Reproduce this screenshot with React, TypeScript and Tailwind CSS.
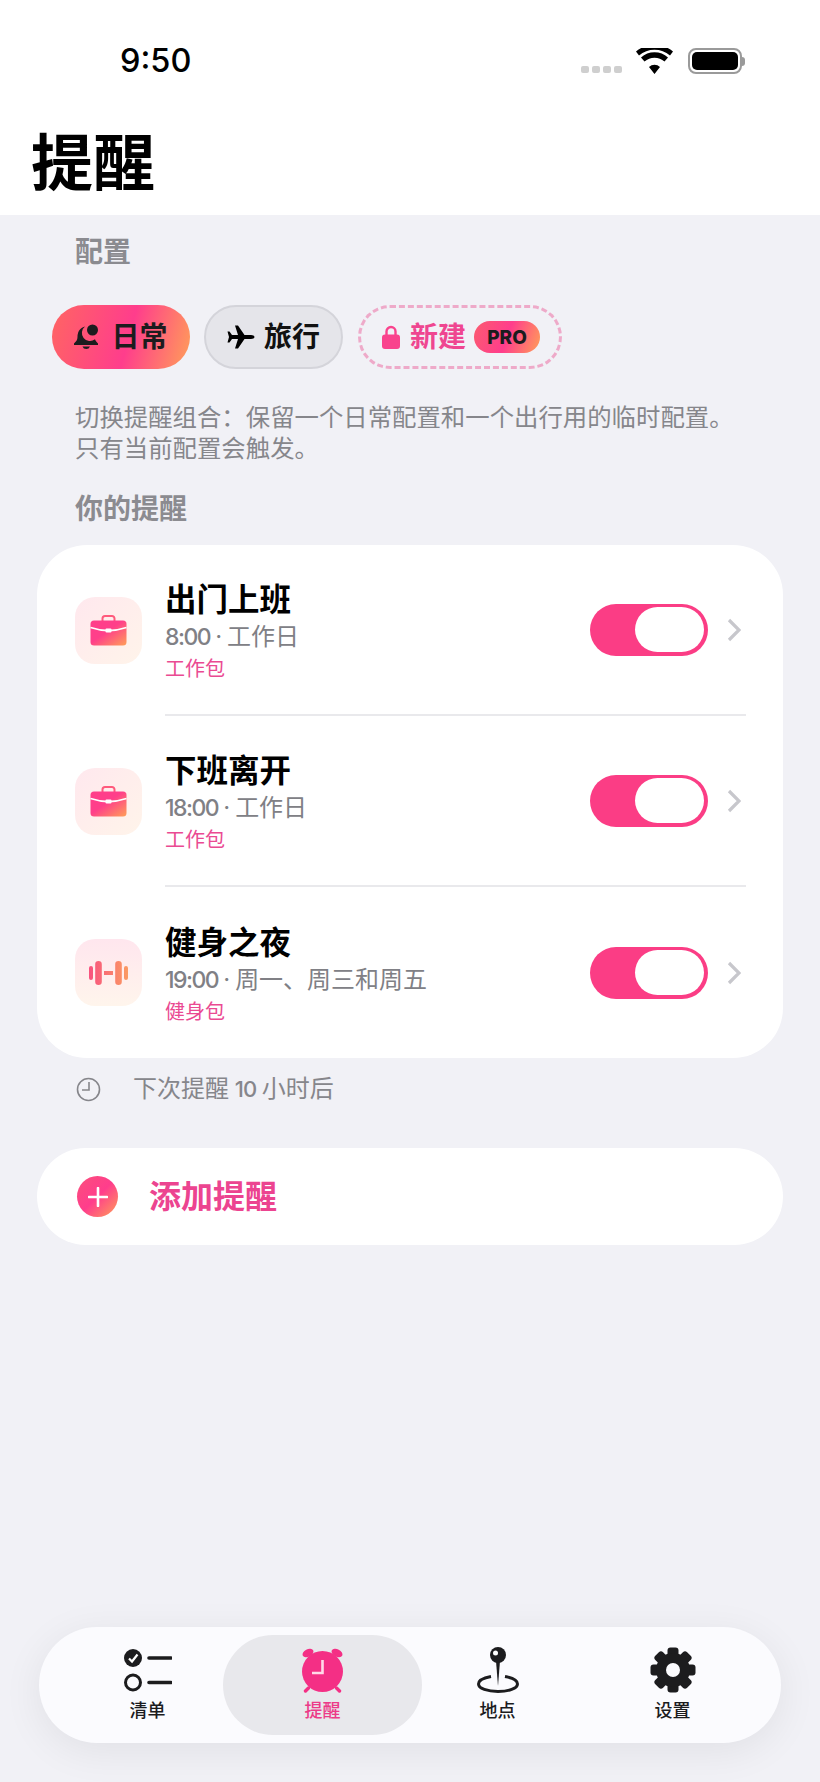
type Reminder = {
    title: string;
    time: string;
    days: string;
    pack: string;
    icon: "work" | "gym";
};

const reminders: Reminder[] = [
    { title: "出门上班", time: "8:00", days: "工作日", pack: "工作包", icon: "work" },
    { title: "下班离开", time: "18:00", days: "工作日", pack: "工作包", icon: "work" },
    { title: "健身之夜", time: "19:00", days: "周一、周三和周五", pack: "健身包", icon: "gym" },
];

const BagIcon = ({ id }: { id: string }) => (
    <svg width="37" height="31" viewBox="0 0 37 31">
        <defs>
            <linearGradient id={id} x1="0" y1="0" x2="1" y2="1">
                <stop offset="0.45" stopColor="#ff3f8a" />
                <stop offset="1" stopColor="#ff9f58" />
            </linearGradient>
        </defs>
        <path d="M12.5 6V3.5A2.5 2.5 0 0 1 15 1h7a2.5 2.5 0 0 1 2.5 2.5V6" fill="none" stroke="#ff5a7c" strokeWidth="2" />
        <rect x="0.5" y="5.5" width="36" height="25" rx="3.5" fill={`url(#${id})`} />
        <path d="M0.5 12.5C8 15 13 15.6 18.5 15.6S29 15 36.5 12.5" fill="none" stroke="#fff" strokeWidth="1.6" />
        <rect x="15.5" y="13.5" width="6" height="4" rx="1" fill="#fff" />
    </svg>
);

const GymIcon = () => (
    <svg width="39" height="24" viewBox="0 0 39 24">
        <defs>
            <linearGradient id="gymGrad" x1="0" y1="0" x2="1" y2="0">
                <stop offset="0" stopColor="#f8527f" />
                <stop offset="1" stopColor="#fb9a62" />
            </linearGradient>
        </defs>
        <path
            d="M2 5a2 2 0 0 1 2 2v10a2 2 0 0 1-4 0V7a2 2 0 0 1 2-2zM9.500 0a3.300 3.300 0 0 1 3.300 3.300v17.400a3.300 3.300 0 0 1-6.600 0V3.300A3.300 3.300 0 0 1 9.500 0zM15 10h9v4h-9zM29.500 0a3.300 3.300 0 0 1 3.300 3.300v17.400a3.300 3.300 0 0 1-6.600 0V3.300A3.300 3.300 0 0 1 29.500 0zM37 5a2 2 0 0 1 2 2v10a2 2 0 0 1-4 0V7a2 2 0 0 1 2-2z"
            fill="url(#gymGrad)"
        />
    </svg>
);

const ChecklistIcon = () => (
    <svg width="48" height="43" viewBox="0 0 48 43">
        <circle cx="9" cy="9" r="9" fill="#1c1c1e" />
        <path d="M5 9.500l3 3 5.500-7" fill="none" stroke="#fff" strokeWidth="2.200" />
        <circle cx="9" cy="33.500" r="7.500" fill="none" stroke="#1c1c1e" strokeWidth="3" />
        <path d="M25 9h22M25 33.500h22" stroke="#1c1c1e" strokeWidth="3.600" strokeLinecap="round" />
    </svg>
);

const AlarmIcon = () => (
    <svg width="41" height="45" viewBox="0 0 41 45">
        <g fill="#f42f85">
            <ellipse cx="6" cy="5" rx="5.800" ry="3.800" transform="rotate(-28 6 5)" />
            <ellipse cx="35" cy="5" rx="5.800" ry="3.800" transform="rotate(28 35 5)" />
            <circle cx="20.500" cy="23.500" r="20.500" />
        </g>
        <path d="M3.500 43l3-3M37.500 43l-3-3" stroke="#f42f85" strokeWidth="3.400" strokeLinecap="round" />
        <path d="M20.500 12v13H10" fill="none" stroke="#ffd9e8" strokeWidth="2.600" />
    </svg>
);

const PinIcon = () => (
    <svg width="42" height="46" viewBox="0 0 42 46">
        <path d="M14 29.500C6 31 1.500 33.500 1.500 37c0 4.500 9 7.500 19.500 7.500S40.500 41.500 40.500 37c0-3.500-4.500-6-12.500-7.500" fill="none" stroke="#1c1c1e" strokeWidth="3" />
        <path d="M19 14h4l-2 25z" fill="#1c1c1e" />
        <circle cx="21" cy="8" r="8" fill="#1c1c1e" />
        <circle cx="18.500" cy="6" r="2.500" fill="#fff" />
    </svg>
);

const GearIcon = () => (
    <svg width="46" height="46" viewBox="0 0 46 46">
        <g fill="#1c1c1e">
            {[0, 45, 90, 135, 180, 225, 270, 315].map((deg) => (
                <rect key={deg} x="17.500" y="0.500" width="11" height="12" rx="3" transform={`rotate(${deg} 23 23)`} />
            ))}
            <circle cx="23" cy="23" r="17" />
        </g>
        <circle cx="23" cy="23" r="7" fill="#fbfbfe" />
    </svg>
);

const tabs = [
    { label: "清单", icon: <ChecklistIcon /> },
    { label: "提醒", icon: <AlarmIcon />, active: true },
    { label: "地点", icon: <PinIcon /> },
    { label: "设置", icon: <GearIcon /> },
];

export default function App() {
    return (
        <div className="flex h-[1782px] w-[820px] flex-col overflow-hidden bg-[#f1f1f6] font-[Inter,'Noto_Sans_CJK_SC',sans-serif] text-black">
            {/* status bar + title */}
            <header className="h-[215px] bg-white pl-[31px] pt-[48px]">
                <div className="flex h-[26px] items-center justify-between pl-[89px] pr-[75px]">
                    <span className="text-[32.500px] font-medium leading-none">9:50</span>
                    <div className="flex items-center">
                        <div className="mt-[17px] flex gap-[3px]">
                            <span className="h-[7px] w-[8px] rounded-[2px] bg-[#cfcfcf]" />
                            <span className="h-[7px] w-[8px] rounded-[2px] bg-[#cfcfcf]" />
                            <span className="h-[7px] w-[8px] rounded-[2px] bg-[#cfcfcf]" />
                            <span className="h-[7px] w-[8px] rounded-[2px] bg-[#cfcfcf]" />
                        </div>
                        <svg className="ml-[14px]" width="37" height="26" viewBox="0 0 37 26">
                            <path d="M18.500 26l-5.500-7a8 8 0 0 1 11 0zM8.500 13.500l-3.500-4a20 20 0 0 1 27 0l-3.500 4a15 15 0 0 0-20 0zM3 7.500L0 3.500a29 29 0 0 1 37 0l-3 4a24 24 0 0 0-31 0z" fill="#000" />
                        </svg>
                        <div className="ml-[15px] flex items-center">
                            <div className="flex h-[26px] w-[54px] items-center justify-center rounded-[8px] border-2 border-[#9a9a9a]">
                                <div className="h-[18px] w-[46px] rounded-[5px] bg-black" />
                            </div>
                            <div className="h-[9px] w-[3px] rounded-r-full bg-[#9a9a9a]" />
                        </div>
                    </div>
                </div>
                <h1 className="mt-[49px] text-[62px] font-bold leading-[82px]">提醒</h1>
            </header>

            <p className="ml-[75px] mt-[19px] text-[28px] font-semibold leading-[36px] text-[#8b8b90]">配置</p>

            {/* config chips */}
            <div className="ml-[52px] mt-[35px] flex">
                <div className="flex h-[64px] w-[138px] items-center justify-center gap-[12px] rounded-full bg-[linear-gradient(105deg,#ff6563_0%,#ff3d8c_55%,#ff9f58_100%)]">
                    <svg width="25" height="26" viewBox="0 0 25 26">
                        <path d="M11 2.500C5 4 3.500 9 3.500 13c0 3-1.500 4.500-3.500 6.500V21h24v-1.500c-1.300-1.300-2.400-2.500-3-4.200a7.500 7.500 0 0 1-10-12.800zM8.500 22.500a4 4 0 0 0 7.500 0z" fill="#1c1c1e" />
                        <circle cx="18.500" cy="6" r="5.500" fill="#1c1c1e" />
                    </svg>
                    <span className="text-[28px] font-bold leading-none text-[#1c1c1e]">日常</span>
                </div>
                <div className="ml-[14px] flex h-[64px] w-[139px] items-center justify-center gap-[9px] rounded-full border-2 border-[#d4d4da] bg-[#e5e5ea]">
                    <svg width="28" height="24" viewBox="0 0 28 24">
                        <path d="M27.500 12c0-1.200-1.600-2-3.500-2h-6.500L11 .5H8l3 9.500H5L2.500 6.500H.5L2 12 .5 17.500h2L5 14h6l-3 9.500h3l6.500-9.500H24c1.900 0 3.500-.8 3.500-2z" fill="#000" />
                    </svg>
                    <span className="text-[28px] font-bold leading-none text-[#111]">旅行</span>
                </div>
                <div className="ml-[15px] flex h-[64px] w-[204px] items-center rounded-full border-[3px] border-dashed border-[#eeaac9] pl-[21px]">
                    <svg width="18" height="24" viewBox="0 0 18 24">
                        <path d="M4.500 11V6.500a4.500 4.500 0 0 1 9 0V11" fill="none" stroke="#f9438d" strokeWidth="2.400" />
                        <rect x="0" y="9.500" width="18" height="14.500" rx="3" fill="#f9438d" />
                    </svg>
                    <span className="ml-[10px] text-[28px] font-bold leading-none text-[#ef4690]">新建</span>
                    <span className="ml-[8px] flex h-[32px] w-[66px] items-center justify-center rounded-full bg-[linear-gradient(110deg,#fb5b70_0%,#ff3d8c_50%,#ff9f58_100%)] text-[19px] font-extrabold leading-none text-[#1c1c1e]">
                        PRO
                    </span>
                </div>
            </div>

            <p className="ml-[75px] mt-[33px] text-[24.400px] leading-[31px] text-[#86868b]">
                切换提醒组合：保留一个日常配置和一个出行用的临时配置。
                <br />
                只有当前配置会触发。
            </p>

            <p className="ml-[75px] mt-[27px] text-[28px] font-semibold leading-[36px] text-[#8b8b90]">你的提醒</p>

            {/* reminder list */}
            <div className="mx-[37px] mt-[18px] rounded-[50px] bg-white">
                {reminders.map((item, i) => (
                    <div key={item.title} className="flex h-[171px] items-center pl-[38px]">
                        <div
                            className={`flex h-[67px] w-[67px] shrink-0 items-center justify-center rounded-[20px] ${
                                item.icon === "gym"
                                    ? "bg-[linear-gradient(180deg,#ffe6ee,#fff5ec)]"
                                    : "bg-[linear-gradient(135deg,#ffe8ee,#fff4ea)]"
                            }`}
                        >
                            {item.icon === "work" ? <BagIcon id={`bag${i}`} /> : <GymIcon />}
                        </div>
                        <div
                            className={`ml-[23px] mr-[37px] flex h-full flex-1 items-center ${
                                i < reminders.length - 1 ? "border-b-2 border-[#e9e9ec]" : ""
                            }`}
                        >
                            <div className="flex-1 pt-[5px]">
                                <p className="text-[31.500px] font-semibold leading-[38px]">{item.title}</p>
                                <p className="text-[24px] leading-[36px] text-[#808085]">
                                    <span className="text-[23px] font-medium tracking-[-1.500px]">{item.time}</span>
                                    <span className="mx-[5px]">·</span>
                                    {item.days}
                                </p>
                                <p className="text-[20px] leading-[28px] text-[#ea4a92]">{item.pack}</p>
                            </div>
                            <div className="flex h-[52px] w-[118px] items-center justify-end rounded-full bg-[#fb3d85] pr-[4px]">
                                <div className="h-[45px] w-[69px] rounded-full bg-white" />
                            </div>
                            <svg className="ml-[19px] mr-[5px]" width="14" height="24" viewBox="0 0 14 24">
                                <path d="M2 2l10 10L2 22" fill="none" stroke="#c7c7cc" strokeWidth="3.200" />
                            </svg>
                        </div>
                    </div>
                ))}
            </div>

            <div className="ml-[76px] mt-[19px] flex h-[24px] items-center">
                <svg width="25" height="25" viewBox="0 0 25 25">
                    <circle cx="12.500" cy="12.500" r="11" fill="none" stroke="#86868b" strokeWidth="1.600" />
                    <path d="M13 5v8H6" fill="none" stroke="#86868b" strokeWidth="1.600" />
                </svg>
                <span className="ml-[32px] text-[24px] leading-none text-[#86868b] [word-spacing:-1px]">
                    下次提醒 <span className="text-[22px] font-medium tracking-[-1px]">10</span> 小时后
                </span>
            </div>

            <div className="mx-[37px] mt-[47px] flex h-[97px] items-center rounded-full bg-white pl-[40px]">
                <div className="flex h-[41px] w-[41px] items-center justify-center rounded-full bg-[linear-gradient(135deg,#fb4f7c_0%,#ff3d8c_50%,#ff9f58_100%)]">
                    <svg width="20" height="20" viewBox="0 0 20 20">
                        <path d="M10 1v18M1 10h18" stroke="#fff" strokeWidth="2.600" strokeLinecap="round" />
                    </svg>
                </div>
                <span className="ml-[31px] text-[32px] font-bold leading-none text-[#ec4490]">添加提醒</span>
            </div>

            {/* tab bar */}
            <nav className="mx-[39px] mb-[39px] mt-auto grid h-[116px] grid-cols-4 items-center rounded-full bg-[#fbfbfe] px-[21px] shadow-[0_8px_40px_rgba(0,0,0,0.07)]">
                {tabs.map((tab) => (
                    <div
                        key={tab.label}
                        className={`flex h-[100px] flex-col items-center justify-center rounded-full ${
                            tab.active ? "-mx-[12px] bg-[#e8e8ec] text-[#ec3b88]" : "text-[#1c1c1e]"
                        }`}
                    >
                        <div className="flex h-[46px] items-center justify-center">{tab.icon}</div>
                        <span className="mt-[6px] text-[18px] font-medium leading-[24px]">{tab.label}</span>
                    </div>
                ))}
            </nav>
        </div>
    );
}
